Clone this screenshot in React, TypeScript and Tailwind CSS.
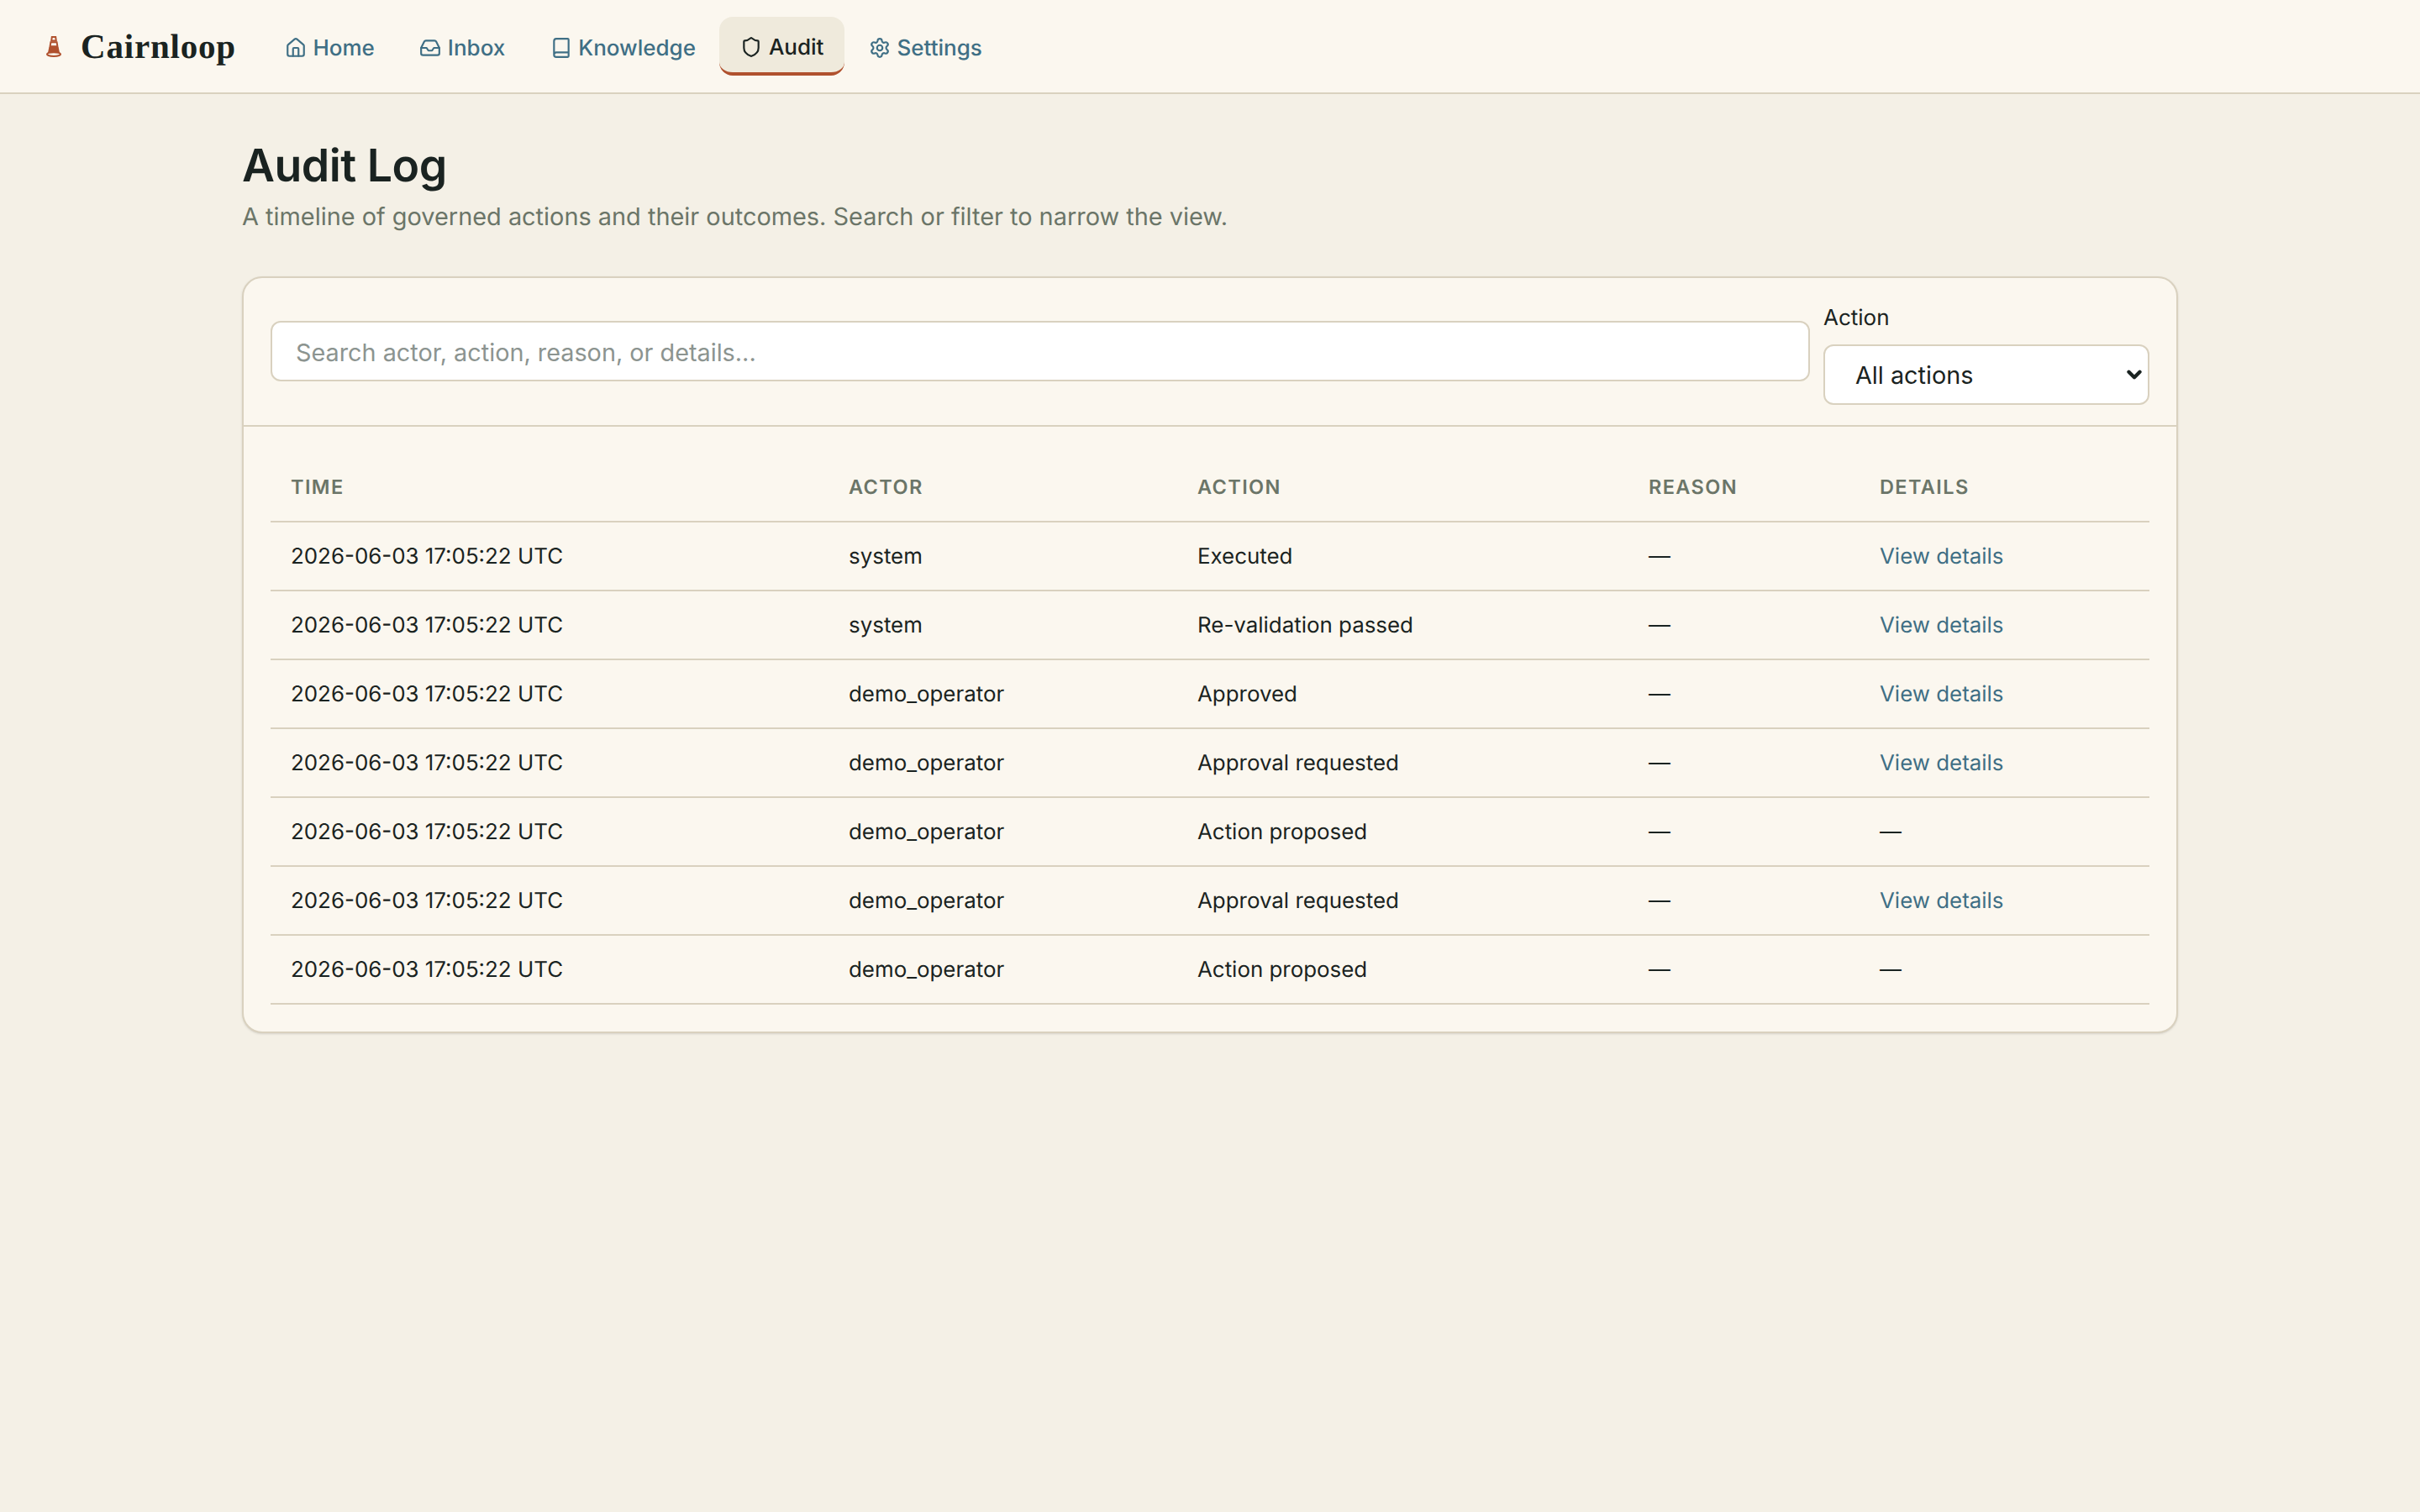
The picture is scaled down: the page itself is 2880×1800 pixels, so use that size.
import { Book, ChevronDown, House, Inbox, Settings, Shield } from "lucide-react";
import type { ReactNode } from "react";

const rows = [
  { actor: "system", action: "Executed", link: true },
  { actor: "system", action: "Re-validation passed", link: true },
  { actor: "demo_operator", action: "Approved", link: true },
  { actor: "demo_operator", action: "Approval requested", link: true },
  { actor: "demo_operator", action: "Action proposed", link: false },
  { actor: "demo_operator", action: "Approval requested", link: true },
  { actor: "demo_operator", action: "Action proposed", link: false },
];

const Logo = () => (
  <svg width="18" height="25" viewBox="0 0 18 25" fill="none" stroke="#b0512e" strokeWidth="2">
    <path d="M6.8 1h4.4l.6 4.5H6.2z" />
    <path d="M5.4 7.2h7.2l.8 5H4.6z" />
    <path d="M4.2 14h9.6l1 5H3.2z" fill="#b0512e" />
    <ellipse cx="9" cy="21.6" rx="8" ry="2.4" />
  </svg>
);

const NavItem = ({ icon, label, active }: { icon: ReactNode; label: string; active?: boolean }) => (
  <a
    className={
      active
        ? "flex h-[70px] items-center gap-[7.5px] rounded-[16px] border-b-4 border-[#b0512e] bg-[#efeadc] px-[25px] pt-[6px] font-medium text-[#1a2321]"
        : "flex h-[70px] items-center gap-[7.5px] rounded-[16px] px-[25px] pt-[4px] font-medium text-[#3f6f85]"
    }
  >
    {icon}
    {label}
  </a>
);

export default function App() {
  return (
    <div className="min-h-screen bg-[#f4f0e6] font-['Inter',sans-serif] text-[#1a2321] [text-rendering:geometricPrecision]">
      <header className="flex h-[112px] items-center border-b-2 border-[#d9d1bf] bg-[#fbf7ef] pl-[55px] text-[26px]">
        <div className="flex items-center gap-[23px]">
          <Logo />
          <span className="font-['Liberation_Serif',serif] text-[41px] font-bold leading-none tracking-[0.8px] text-[#1a2321]">Cairnloop</span>
        </div>
        <nav className="ml-[33px] flex items-center gap-[3.5px]">
          <NavItem icon={<House size={26} strokeWidth={2} />} label="Home" />
          <NavItem icon={<Inbox size={26} strokeWidth={2} />} label="Inbox" />
          <NavItem icon={<Book size={26} strokeWidth={2} />} label="Knowledge" />
          <NavItem icon={<Shield size={26} strokeWidth={2} />} label="Audit" active />
          <NavItem icon={<Settings size={26} strokeWidth={2} />} label="Settings" />
        </nav>
      </header>

      <main className="mx-auto w-[2304px] pt-[53px]">
        <h1 className="text-[53.6px] font-semibold leading-[64px] tracking-[-0.5px]">Audit Log</h1>
        <p className="mt-[7px] text-[28.9px] leading-[44px] text-[#6b7568]">
          A timeline of governed actions and their outcomes. Search or filter to narrow the view.
        </p>

        <section className="mt-[49px] rounded-[24px] border-2 border-[#d9d1bf] bg-[#fbf7ef] shadow-sm">
          <div className="flex items-end gap-[16px] border-b-2 border-[#d9d1bf] px-[32px] pb-[24px] pt-[30px]">
            <input
              className="mb-[28px] h-[72px] flex-1 rounded-[12px] border-2 border-[#d9d1bf] bg-white px-[28px] pt-[2px] text-[28.8px] outline-none placeholder:text-[#8c9490]"
              placeholder="Search actor, action, reason, or details..."
            />
            <label className="block w-[388px] text-[26px]">
              <span className="block leading-[36px]">Action</span>
              <span className="relative mt-[13px] block">
                <select className="h-[72px] w-full appearance-none rounded-[12px] border-2 border-[#d9d1bf] bg-white px-[36px] pt-[2px] text-[28.8px]">
                  <option>All actions</option>
                </select>
                <ChevronDown size={26} strokeWidth={4} className="absolute right-[5px] top-[23px]" />
              </span>
            </label>
          </div>

          <div className="px-[32px] pb-[32px] pt-[30px]">
            <table className="w-full table-fixed border-collapse text-left text-[25.9px]">
              <thead>
                <tr className="h-[83px] border-b-2 border-[#d9d1bf] text-[23.5px] tracking-[1.4px] text-[#6b7568]">
                  <th className="w-[664px] pl-[24px] pt-[2px] font-semibold">TIME</th>
                  <th className="w-[415px] pl-[24px] pt-[2px] font-semibold">ACTOR</th>
                  <th className="w-[537px] pl-[24px] pt-[2px] font-semibold">ACTION</th>
                  <th className="w-[275px] pl-[24px] pt-[2px] font-semibold">REASON</th>
                  <th className="pl-[24px] pt-[2px] font-semibold">DETAILS</th>
                </tr>
              </thead>
              <tbody>
                {rows.map((row, i) => (
                  <tr key={i} className="h-[82px] border-b-2 border-[#d9d1bf]">
                    <td className="pl-[24px] pt-[3px]">2026-06-03 17:05:22 UTC</td>
                    <td className="pl-[24px] pt-[3px]">{row.actor}</td>
                    <td className="pl-[24px] pt-[3px]">{row.action}</td>
                    <td className="pl-[24px] pt-[3px]">—</td>
                    <td className="pl-[24px] pt-[3px]">
                      {row.link ? <a className="text-[#3f6f85]">View details</a> : "—"}
                    </td>
                  </tr>
                ))}
              </tbody>
            </table>
          </div>
        </section>
      </main>
    </div>
  );
}
